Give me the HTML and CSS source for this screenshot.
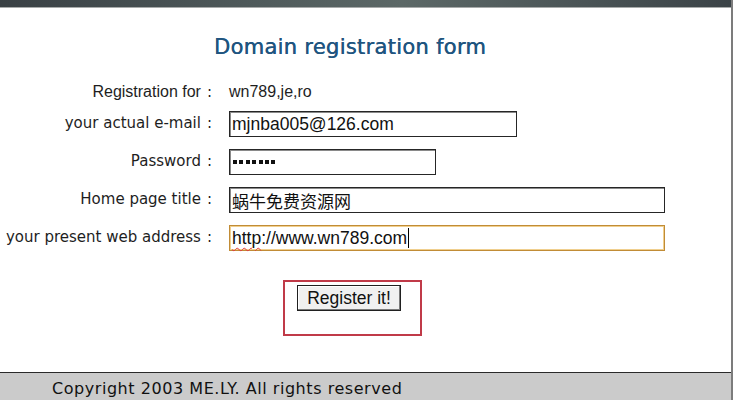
FILE: index.html
```html
<!DOCTYPE html>
<html lang="en">
<head>
<meta charset="utf-8">
<title>Domain registration form</title>
<link rel="stylesheet" href="styles.css">
</head>
<body>
<div class="page">
  <div class="topbar"></div>
  <main class="main">
    <h1 class="title">Domain registration form</h1>
    <form class="form">
      <div class="row row-first">
        <span class="label label-first">Registration for<span class="colon">:</span></span>
        <span class="value">wn789,je,ro</span>
      </div>
      <div class="row">
        <label class="label">your actual e-mail<span class="colon">:</span></label>
        <input class="field field-email" type="text" value="mjnba005@126.com">
      </div>
      <div class="row">
        <label class="label">Password<span class="colon">:</span></label>
        <div class="field field-pass" aria-label="password"><span class="dot"></span><span class="dot"></span><span class="dot"></span><span class="dot"></span><span class="dot"></span><span class="dot"></span><span class="dot"></span></div>
      </div>
      <div class="row">
        <label class="label">Home page title<span class="colon">:</span></label>
        <input class="field field-wide field-cjk" type="text" value="蜗牛免费资源网">
      </div>
      <div class="row">
        <label class="label">your present web address<span class="colon">:</span></label>
        <div class="field field-wide field-focus"><span class="misspelt">http</span>://www.wn789.com<span class="caret"></span></div>
      </div>
      <div class="submit-box">
        <button class="btn" type="button">Register it!</button>
      </div>
    </form>
  </main>
  <footer class="footer">Copyright 2003 ME.LY. All rights reserved</footer>
</div>
</body>
</html>
```
FILE: styles.css
```css
html, body {
  margin: 0;
  padding: 0;
  background: #ffffff;
}

.page {
  width: 731px;
  height: 400px;
  border-right: 2px solid #7c7c7c;
  display: flex;
  flex-direction: column;
  overflow: hidden;
}

.topbar {
  height: 7px;
  background: linear-gradient(90deg, #394044 0%, #4f5a5b 35%, #5c6867 55%, #4a5456 80%, #3b4347 100%);
  border-bottom: 1px solid #a7aaaa;
  flex: none;
}

.main {
  flex: 1;
  display: flex;
  flex-direction: column;
}

.title {
  margin: 27px 0 0 0;
  width: 700px;
  text-align: center;
  font-family: "DejaVu Sans", Verdana, sans-serif;
  font-weight: normal;
  font-size: 21px;
  line-height: 24px;
  letter-spacing: 0.3px;
  color: #1f5580;
  text-shadow: 0.4px 0 0 #1f5580;
}

.form {
  margin: 23px 0 0 0;
  display: flex;
  flex-direction: column;
  gap: 12px;
}

.row {
  display: flex;
  align-items: center;
  height: 26px;
}

.row-first {
  height: 20px;
  margin-bottom: -3px;
}

.label {
  width: 229px;
  flex: none;
  box-sizing: border-box;
  padding-right: 17px;
  text-align: right;
  white-space: nowrap;
  font-family: "DejaVu Sans", Verdana, sans-serif;
  font-size: 15px;
  line-height: 18px;
  color: #1e1e1e;
  position: relative;
  top: -1px;
}

.label-first {
  font-family: "Liberation Sans", Arial, sans-serif;
  font-size: 16px;
  top: 0;
}

.colon {
  margin-left: 6px;
  font-family: "DejaVu Sans", Verdana, sans-serif;
  font-size: 15px;
}

.value {
  font-family: "Liberation Sans", Arial, sans-serif;
  font-size: 16px;
  color: #1e1e1e;
}

.field {
  box-sizing: border-box;
  height: 26px;
  margin: 0;
  padding: 0 2px;
  border: 1px solid #262626;
  box-shadow: inset 1px 1px 0 #8a8a8a;
  background: #ffffff;
  font-family: "Liberation Sans", Arial, sans-serif;
  font-size: 17.5px;
  color: #111111;
  outline: none;
}

.field-email {
  width: 288px;
}

.field-pass {
  width: 207px;
  display: flex;
  align-items: center;
  gap: 2.4px;
  padding-left: 3px;
}

.dot {
  width: 4px;
  height: 4px;
  background: #111111;
  flex: none;
}

.field-wide {
  width: 436px;
}

.field-cjk {
  font-family: "Noto Sans CJK SC", "Liberation Sans", sans-serif;
  font-size: 17px;
}

.field-focus {
  display: flex;
  align-items: center;
  border: 1px solid #c18c36;
  box-shadow: inset 0 0 0 1px #f0cf8e;
  padding-left: 2px;
}

.misspelt {
  text-decoration: underline wavy #e0393e;
  text-decoration-thickness: 1px;
  text-underline-offset: 3px;
}

.caret {
  display: inline-block;
  width: 1px;
  height: 20px;
  margin-left: 1px;
  background: #000000;
}

.submit-box {
  box-sizing: border-box;
  width: 139px;
  height: 56px;
  margin: 17px 0 0 283px;
  border: 2px solid #c03a48;
  display: flex;
  justify-content: flex-start;
  align-items: flex-start;
  padding: 3px 0 0 12px;
}

.btn {
  box-sizing: border-box;
  width: 104px;
  height: 26px;
  margin: 0;
  padding: 0;
  border: 1px solid #202020;
  box-shadow: inset -1px -1px 0 #7a7a7a, inset 1px 1px 0 #ffffff;
  background: #f0f0f0;
  font-family: "Liberation Sans", Arial, sans-serif;
  font-size: 17.5px;
  color: #111111;
}

.footer {
  flex: none;
  box-sizing: border-box;
  height: 28px;
  border-top: 1px solid #2a2a2a;
  background: #cbcbcb;
  padding: 6px 0 0 52px;
  font-family: "DejaVu Sans", Verdana, sans-serif;
  font-size: 16px;
  line-height: 20px;
  letter-spacing: 0.55px;
  color: #111111;
  white-space: nowrap;
}
```
